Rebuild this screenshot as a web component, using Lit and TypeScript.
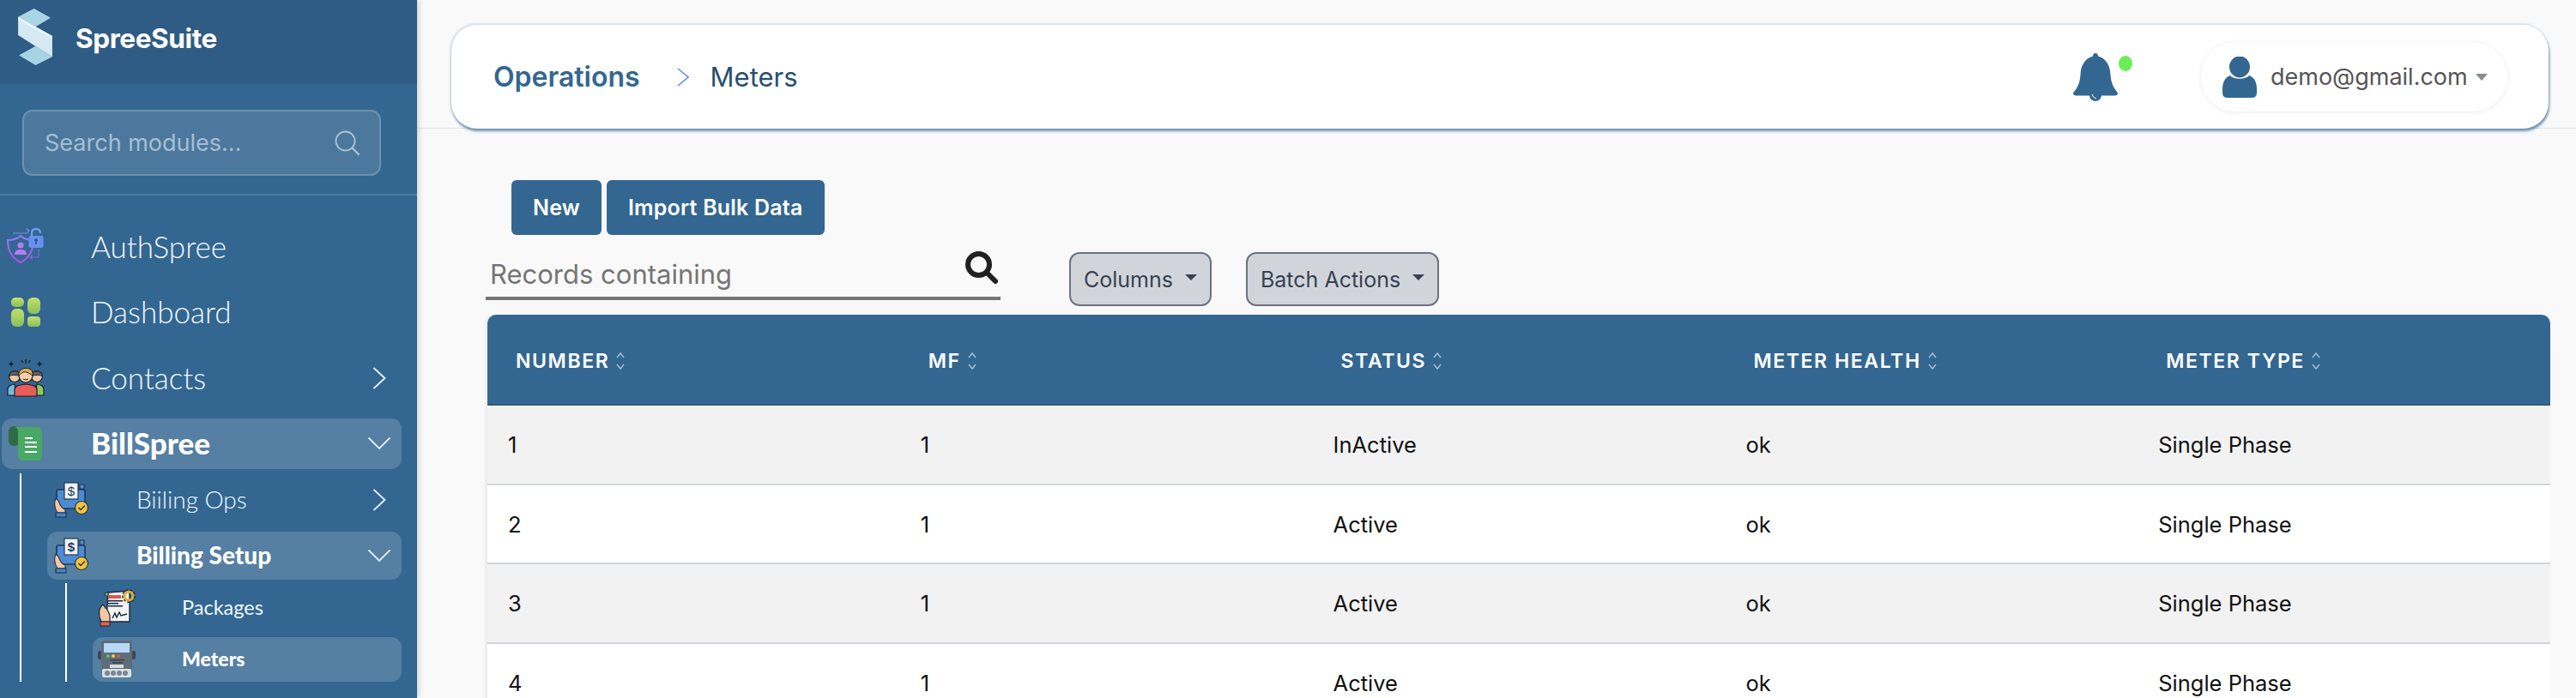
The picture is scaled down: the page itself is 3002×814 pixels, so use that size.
import { LitElement, css, html } from "lit";
import { customElement } from "lit/decorators.js";

const logo = html`<svg class="logo" viewBox="0 0 44 70">
  <polygon points="20,0 40,11 22,22 1,10" fill="#a9d5e4" />
  <polygon points="1,10 42,33 42,58 1,32" fill="#d5e9f2" />
  <polygon points="1,10 42,33 42,36 1,13" fill="#eaf5f9" />
  <polygon points="22,45 42,58 22,68 2,56" fill="#a6d4e3" />
</svg>`;

const authIcon = html`<svg class="ic" viewBox="0 0 44 44">
  <defs>
    <linearGradient id="sh" x1="0" y1="0" x2="0" y2="1">
      <stop offset="0" stop-color="#8f7cf0" /><stop offset="1" stop-color="#b14ef0" />
    </linearGradient>
  </defs>
  <path d="M7 6H23L26 3M26 3L23 0.5M26 3" fill="none" stroke="#6f93e8" stroke-width="1.2" />
  <path d="M16 9C12 13 6 14 1 14C1 26 6 35 16 40C26 35 31 26 31 14C26 14 20 13 16 9Z" fill="none" stroke="url(#sh)" stroke-width="2" />
  <circle cx="16" cy="20" r="3.6" fill="#b77bf0" />
  <path d="M9 31C9 26 12 25 16 25C20 25 23 26 23 31Z" fill="#b77bf0" />
  <path d="M29 10V6C29 3 31 1 34 1C37 1 39 3 39 6" fill="none" stroke="#6fa0f0" stroke-width="2.2" />
  <rect x="25.5" y="9" width="17" height="14" rx="2" fill="#6690ee" />
  <circle cx="34" cy="14" r="1.8" fill="#274a86" /><rect x="33.3" y="14" width="1.4" height="5" fill="#274a86" />
  <path d="M37 25V34H27M27 34L30 31.5M27 34L30 36.5" fill="none" stroke="#8a66dc" stroke-width="1.2" />
</svg>`;

const dashIcon = html`<svg class="ic" viewBox="0 0 44 44">
  <defs>
    <linearGradient id="dg" x1="0" y1="0" x2="0" y2="1">
      <stop offset="0" stop-color="#c8dc6c" /><stop offset="1" stop-color="#86c25c" />
    </linearGradient>
  </defs>
  <g fill="url(#dg)">
    <rect x="5" y="5" width="15" height="11" rx="5" />
    <rect x="5" y="18" width="15" height="21" rx="6" />
    <rect x="24" y="5" width="15" height="19" rx="6" />
    <rect x="24" y="27" width="15" height="12" rx="4" />
  </g>
</svg>`;

const contactsIcon = html`<svg class="ic" viewBox="0 0 44 44">
  <path d="M5 2L6 4.5L8.5 5.5L6 6.5L5 9L4 6.5L1.5 5.5L4 4.5Z M38 2L39 4.5L41.5 5.5L39 6.5L38 9L37 6.5L34.5 5.5L37 4.5Z" fill="#14202c" />
  <path d="M22 0V5M17 1L18.5 4M27 1L25.5 4" stroke="#14202c" stroke-width="1.3" />
  <path d="M1 42V35C1 31 4 30 9 29L11 42Z" fill="#78b9e2" stroke="#14202c" stroke-width="1.2" />
  <path d="M43 42V35C43 31 40 30 35 29L33 42Z" fill="#90c85c" stroke="#14202c" stroke-width="1.2" />
  <circle cx="9" cy="20" r="6.5" fill="#f2c7a2" stroke="#14202c" stroke-width="1.2" />
  <circle cx="35" cy="20" r="6.5" fill="#f2c7a2" stroke="#14202c" stroke-width="1.2" />
  <path d="M2.5 20C2.5 12 15.5 12 15.5 19C10 19 7 17 2.5 20Z M41.5 20C41.5 12 28.5 12 28.5 19C34 19 37 17 41.5 20Z" fill="#5c6066" stroke="#14202c" stroke-width="1" />
  <path d="M9 43V35C9 31 14 30 22 29C30 30 35 31 35 35V43Z" fill="#ea5c58" stroke="#14202c" stroke-width="1.2" />
  <circle cx="22" cy="19" r="8" fill="#f7cfa6" stroke="#14202c" stroke-width="1.2" />
  <path d="M14 19C12 8 32 7 30 19C26 16 22 14 19 15C17 16 16 17 14 19Z" fill="#e8ae4a" stroke="#14202c" stroke-width="1" />
  <path d="M19 23Q22 25 25 23" fill="none" stroke="#14202c" stroke-width="1" />
</svg>`;

const billIcon = html`<svg class="ic" viewBox="0 0 44 44">
  <rect x="2" y="2" width="13" height="23" rx="6" fill="#2f6a47" />
  <path d="M8 3H34Q41 3 41 10V36Q41 42 35 42H19Q13 42 13 36V9Q13 3 8 3Z" fill="#49a864" />
  <g fill="#fff">
    <rect x="21" y="15" width="9" height="2" /><rect x="21" y="20" width="14" height="2" />
    <rect x="21" y="25" width="14" height="2" /><rect x="21" y="31" width="14" height="2" />
  </g>
</svg>`;

const billingOpsIcon = html`<svg class="ic-sub" viewBox="0 0 42 42">
  <path d="M31 3H36V8H31Z" fill="#5a8fd0" stroke="#1e3a5a" stroke-width="1.2" />
  <rect x="4" y="9" width="33" height="22" rx="2" fill="#4f8bd2" stroke="#1e3a5a" stroke-width="1.6" />
  <rect x="13" y="1" width="16" height="19" fill="#f1f3f6" stroke="#1e3a5a" stroke-width="1.2" />
  <text x="21" y="16" text-anchor="middle" class="dollar">$</text>
  <path d="M3 19C1 24 1 30 5 36H14L14 32C9 31 8 26 6 22Z" fill="#f8c6a0" stroke="#1e3a5a" stroke-width="1.2" />
  <rect x="3" y="36" width="12" height="5" fill="#4484cc" stroke="#1e3a5a" stroke-width="1.2" />
  <circle cx="33" cy="30" r="7.5" fill="#f5c234" stroke="#1e3a5a" stroke-width="1.2" />
  <path d="M29.5 30L32 32.5L37 27.5" fill="none" stroke="#1e3a5a" stroke-width="1.5" />
</svg>`;

const packagesIcon = html`<svg class="ic" viewBox="0 0 44 44">
  <path d="M12 4L37 2V38H10Z" fill="#f3f4f6" stroke="#18283c" stroke-width="1.4" />
  <path d="M7 6L12 3L12 9Z" fill="#8cc262" stroke="#18283c" stroke-width="1" />
  <rect x="12" y="7" width="15" height="4" fill="#e0574f" />
  <rect x="12" y="13" width="17" height="1.5" fill="#18283c" /><rect x="12" y="16" width="12" height="1.5" fill="#18283c" />
  <rect x="12" y="19" width="17" height="1.5" fill="#18283c" />
  <path d="M17 34L20 28L22 33L25 27L27 31L34 29" fill="none" stroke="#18283c" stroke-width="1.4" />
  <circle cx="36" cy="8" r="5" fill="none" stroke="#e6ad2c" stroke-width="3" />
  <circle cx="36" cy="8" r="7.2" fill="none" stroke="#18283c" stroke-width="1.4" stroke-dasharray="3 2" />
  <path d="M6 18C1 22 0 30 4 38H14V31C13 28 12 24 9 22Z" fill="#f8c6a0" stroke="#18283c" stroke-width="1.2" />
  <rect x="3" y="38" width="11" height="5" fill="#e8604c" stroke="#18283c" stroke-width="1" />
</svg>`;

const meterIcon = html`<svg class="ic" viewBox="0 0 44 44">
  <rect x="0" y="12" width="5" height="10" rx="2" fill="#3d4854" /><rect x="39" y="12" width="5" height="10" rx="2" fill="#3d4854" />
  <rect x="4" y="0" width="36" height="34" rx="3" fill="#5f6c79" />
  <rect x="7" y="3" width="30" height="11" fill="#b7d8f7" />
  <circle cx="12" cy="18" r="2" fill="#6fbf5c" /><circle cx="18" cy="18" r="2" fill="#e8d24c" /><circle cx="24" cy="18" r="2" fill="#db5a52" />
  <rect x="14" y="22" width="17" height="1.5" fill="#39434e" /><rect x="17" y="25" width="12" height="1.5" fill="#39434e" />
  <rect x="14" y="28" width="16" height="4" fill="#d8dde2" />
  <rect x="5" y="33" width="34" height="10" rx="2" fill="#d9dfe4" />
  <g fill="#7a8792"><circle cx="11" cy="38" r="3" /><circle cx="18" cy="38" r="3" /><circle cx="25" cy="38" r="3" /><circle cx="32" cy="38" r="3" /></g>
</svg>`;

const chevronRight = html`<svg class="chev" viewBox="0 0 26 26"><path d="M6.5 1L19.5 13L6.5 25" /></svg>`;
const chevronDown = html`<svg class="chev" viewBox="0 0 26 26"><path d="M0.5 6.5L13 19L25.5 6.5" /></svg>`;

const columns = ["NUMBER", "MF", "STATUS", "METER HEALTH", "METER TYPE"];
const rows = [
  ["1", "1", "InActive", "ok", "Single Phase"],
  ["2", "1", "Active", "ok", "Single Phase"],
  ["3", "1", "Active", "ok", "Single Phase"],
  ["4", "1", "Active", "ok", "Single Phase"],
];

@customElement("app-root")
export class AppRoot extends LitElement {
  static styles = css`
    :host {
      display: flex;
      width: 3002px;
      height: 814px;
      overflow: hidden;
      background: #f9f9f9;
      font-family: Inter, "Liberation Sans", sans-serif;
    }
    .sidebar {
      flex: none;
      width: 486px;
      height: 814px;
      background: #336791;
      box-shadow: 3px 0 5px rgba(0, 0, 0, 0.12);
      z-index: 2;
    }
    .brand {
      height: 98px;
      background: #2f5c84;
      display: flex;
      align-items: center;
      gap: 25px;
      padding: 0 0 10px 20px;
      box-sizing: border-box;
      color: #fff;
      font-size: 31.5px;
      font-weight: 700;
      letter-spacing: -0.4px;
    }
    .logo {
      width: 43px;
      height: 68px;
    }
    .search-wrap {
      padding: 30px 42px 21px 26px;
      border-bottom: 2px solid #4d7ba0;
    }
    .search-box {
      height: 77px;
      box-sizing: border-box;
      border: 2px solid #6d91b0;
      border-radius: 12px;
      background: #4d789d;
      display: flex;
      align-items: center;
      justify-content: space-between;
      padding: 0 22px 0 24px;
      color: #a4bfd4;
      font-size: 27px;
    }
    .search-box svg {
      width: 30px;
      height: 30px;
    }
    nav {
      padding: 30px 18px 0 2px;
      font-family: Lato, "Noto Sans", sans-serif;
      color: #f2f8fc;
    }
    .label {
      padding-bottom: 2px;
    }
    .item {
      display: flex;
      align-items: center;
      height: 59px;
      margin-bottom: 17.5px;
      padding: 0 13px 0 6px;
      border-radius: 12px;
      font-size: 35px;
      font-weight: 300;
    }
    .item.open {
      background: #557fa3;
      color: #fff;
      font-weight: 900;
      margin-bottom: 5px;
    }
    .item .label {
      margin-left: 54px;
      flex: 1;
    }
    .ic {
      width: 44px;
      height: 44px;
      flex: none;
    }
    .ic-sub {
      width: 42px;
      height: 42px;
      flex: none;
    }
    .dollar {
      font-family: "Liberation Sans", sans-serif;
      font-size: 15px;
      fill: #1e3a5a;
    }
    .chev {
      width: 26px;
      height: 26px;
      flex: none;
      fill: none;
      stroke: #e6f1f8;
      stroke-width: 1.8;
    }
    .sub {
      margin-left: 21px;
      border-left: 2px solid #fff;
      padding: 3px 0 0 30px;
    }
    .sub-item {
      display: flex;
      align-items: center;
      height: 56px;
      margin-bottom: 9px;
      padding: 0 13px 0 7px;
      border-radius: 12px;
      font-size: 28px;
      font-weight: 300;
    }
    .sub-item .label {
      margin-left: 55px;
      flex: 1;
    }
    .sub-item.open {
      background: #557fa3;
      color: #fff;
      font-weight: 900;
      margin-bottom: 4px;
    }
    .leaf {
      display: flex;
      align-items: center;
      height: 52px;
      margin-bottom: 8px;
      padding: 0 13px 0 6px;
      border-radius: 12px;
      font-size: 23.5px;
    }
    .leaf:last-child {
      margin-bottom: 4px;
    }
    .leaf .label {
      margin-left: 54px;
    }
    .leaf.active {
      background: #557fa3;
      color: #fff;
      font-weight: 900;
      font-size: 23px;
    }
    .main {
      flex: 1;
      min-width: 0;
    }
    .top {
      height: 150px;
      box-sizing: border-box;
      padding: 29px 32px 0 40px;
      border-bottom: 1px solid #e6e6e6;
    }
    .bar {
      height: 121px;
      box-sizing: border-box;
      background: #fff;
      border-radius: 30px;
      box-shadow: 1px 3px 3px rgba(51, 103, 145, 0.7), -1px -1px 3px rgba(51, 103, 145, 0.25);
      display: flex;
      align-items: center;
      padding: 0 48px 0 49px;
    }
    .crumb {
      font-size: 32px;
      font-weight: 600;
      color: #336791;
    }
    .bar .sep {
      width: 14px;
      height: 22px;
      margin: 0 25px 0 43px;
      fill: none;
      stroke: #5f8bec;
      stroke-width: 1.5;
    }
    .page {
      font-size: 31px;
      color: #27506f;
      flex: 1;
    }
    .bell {
      width: 52px;
      height: 56px;
      flex: none;
      fill: #336791;
    }
    .dot {
      width: 16px;
      height: 18px;
      border-radius: 50%;
      background: #6cec55;
      margin: -32px 0 0 1px;
      flex: none;
    }
    .user {
      margin-left: 80px;
      width: 357px;
      height: 81px;
      box-sizing: border-box;
      border-radius: 41px;
      box-shadow: 0 1px 6px rgba(0, 0, 0, 0.08);
      display: flex;
      align-items: center;
      padding-left: 25px;
      color: #555;
      font-size: 27px;
    }
    .user svg.person {
      width: 40px;
      height: 48px;
      margin-right: 16px;
      fill: #336791;
    }
    .caret {
      width: 0;
      height: 0;
      margin-left: 9px;
      border-left: 7px solid transparent;
      border-right: 7px solid transparent;
      border-top: 8px solid #8a8a8a;
    }
    .actions {
      display: flex;
      gap: 6px;
      margin: 60px 0 0 110px;
    }
    .btn {
      height: 64px;
      display: flex;
      align-items: center;
      padding: 0 25px;
      border-radius: 6px;
      background: #336791;
      color: #fff;
      font-size: 25px;
      font-weight: 600;
      letter-spacing: 0.2px;
    }
    .filters {
      display: flex;
      align-items: flex-start;
      margin: 20px 0 0 80px;
    }
    .records {
      width: 600px;
      height: 56px;
      box-sizing: border-box;
      margin-right: 80px;
      border-bottom: 4px solid #757575;
      display: flex;
      justify-content: space-between;
      padding: 7px 3px 0 5px;
      color: #757575;
      font-size: 31px;
    }
    .records svg {
      width: 38px;
      height: 38px;
      margin-top: -8px;
    }
    .drop {
      height: 63px;
      box-sizing: border-box;
      margin-right: 40px;
      display: flex;
      align-items: center;
      gap: 14px;
      padding: 0 15px;
      background: #d1d5db;
      border: 2px solid #6b7280;
      border-radius: 12px;
      color: #374151;
      font-size: 25px;
    }
    .drop i {
      width: 0;
      height: 0;
      border-left: 7px solid transparent;
      border-right: 7px solid transparent;
      border-top: 7px solid #374151;
      margin-top: -4px;
    }
    .table {
      margin: 10px 30px 0 82px;
      box-shadow: -3px 0 3px rgba(0, 0, 0, 0.05);
      border-top-left-radius: 10px;
      border-top-right-radius: 10px;
      overflow: hidden;
    }
    .row {
      display: grid;
      grid-template-columns: repeat(5, 1fr);
    }
    .head {
      height: 106px;
      box-sizing: border-box;
      align-items: center;
      padding-top: 4px;
      background: #336791;
      border-bottom: 2px solid #2c5a80;
      color: #fff;
      font-size: 23px;
      font-weight: 600;
      letter-spacing: 1.6px;
    }
    .head > div {
      display: flex;
      align-items: center;
      gap: 8px;
      padding-left: 33px;
    }
    .head svg {
      width: 10px;
      height: 24px;
      fill: none;
      stroke: rgba(255, 255, 255, 0.55);
      stroke-width: 1.6;
    }
    .cell-row {
      height: 92.5px;
      box-sizing: border-box;
      align-items: center;
      border-bottom: 2px solid #d1d5db;
      background: #fff;
      color: #111;
      font-size: 25.5px;
    }
    .cell-row:nth-child(odd) {
      background: #f2f2f2;
    }
    .cell-row > div {
      padding: 1px 0 0 24px;
    }
  `;

  render() {
    return html`
      <aside class="sidebar">
        <div class="brand">${logo}<span>SpreeSuite</span></div>
        <div class="search-wrap">
          <div class="search-box">
            <span>Search modules...</span>
            <svg viewBox="0 0 30 30" fill="none" stroke="#a9c3d7" stroke-width="1.8">
              <circle cx="12.5" cy="12.5" r="11" /><path d="M20.5 20.5L28.5 28.5" stroke-width="2.4" />
            </svg>
          </div>
        </div>
        <nav>
          <div class="item">${authIcon}<span class="label">AuthSpree</span></div>
          <div class="item">${dashIcon}<span class="label">Dashboard</span></div>
          <div class="item">${contactsIcon}<span class="label">Contacts</span>${chevronRight}</div>
          <div class="item open">${billIcon}<span class="label">BillSpree</span>${chevronDown}</div>
          <div class="sub">
            <div class="sub-item">${billingOpsIcon}<span class="label">Biiling Ops</span>${chevronRight}</div>
            <div class="sub-item open">${billingOpsIcon}<span class="label">Billing Setup</span>${chevronDown}</div>
            <div class="sub">
              <div class="leaf">${packagesIcon}<span class="label">Packages</span></div>
              <div class="leaf active">${meterIcon}<span class="label">Meters</span></div>
            </div>
          </div>
        </nav>
      </aside>
      <main class="main">
        <div class="top">
          <div class="bar">
            <span class="crumb">Operations</span>
            <svg class="sep" viewBox="0 0 14 22"><path d="M1 1L13 11L1 21" /></svg>
            <span class="page">Meters</span>
            <svg class="bell" viewBox="0 0 52 56">
              <path d="M26 0C28 0 29 1.5 29 3.5C38 6 43 14 43.5 25C44 35 48 42 51.5 45.5Q53 49 49 49.5H3Q-1 49 0.5 45.5C4 42 8 35 8.5 25C9 14 14 6 23 3.5C23 1.5 24 0 26 0Z" />
              <ellipse cx="26" cy="49" rx="7" ry="7" />
              <path d="M22 48Q23 52 27 53" fill="none" stroke="#fff" stroke-width="1" />
            </svg>
            <span class="dot"></span>
            <div class="user">
              <svg class="person" viewBox="0 0 40 48">
                <ellipse cx="20" cy="12" rx="12" ry="12.5" />
                <path d="M0 38C0 30 3 24 9 22C13 27 27 27 31 22C37 24 40 30 40 38V42Q40 48 34 48H6Q0 48 0 42Z" />
              </svg>
              <span>demo@gmail.com</span><span class="caret"></span>
            </div>
          </div>
        </div>
        <div class="actions">
          <div class="btn">New</div>
          <div class="btn">Import Bulk Data</div>
        </div>
        <div class="filters">
          <div class="records">
            <span>Records containing</span>
            <svg viewBox="0 0 38 38" fill="none" stroke="#212121">
              <circle cx="15.5" cy="15.5" r="12.5" stroke-width="6" /><path d="M25 25L35 35" stroke-width="6" stroke-linecap="round" />
            </svg>
          </div>
          <div class="drop">Columns <i></i></div>
          <div class="drop">Batch Actions <i></i></div>
        </div>
        <div class="table">
          <div class="row head">
            ${columns.map(
              (c) => html`<div>
                ${c}
                <svg viewBox="0 0 10 24"><path d="M1 8L5 3L9 8M1 16L5 21L9 16" /></svg>
              </div>`,
            )}
          </div>
          <div>
            ${rows.map(
              (r) => html`<div class="row cell-row">${r.map((v) => html`<div>${v}</div>`)}</div>`,
            )}
          </div>
        </div>
      </main>
    `;
  }
}
